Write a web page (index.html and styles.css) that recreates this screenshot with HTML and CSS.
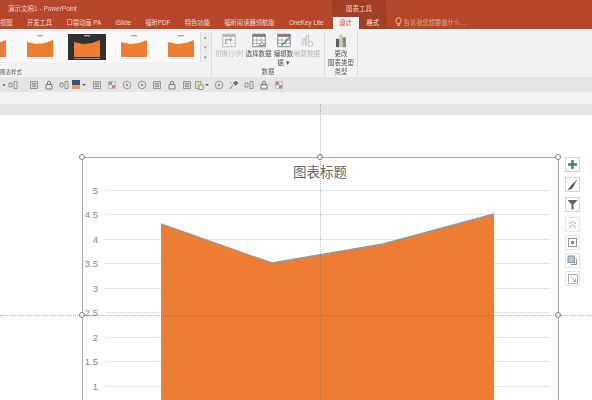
FILE: index.html
```html
<!DOCTYPE html>
<html lang="zh-CN">
<head>
    <meta charset="UTF-8">
    <title>演示文稿1 - PowerPoint</title>
    <link rel="stylesheet" href="styles.css">
</head>
<body>

<svg class="defs" width="0" height="0">
    <symbol id="mini" viewBox="0 0 38 26">
        <rect x="16" y="1" width="6" height="1.4" fill="#aaa"/>
        <path d="M6 8 L15 10 L24 9 L32 6 V23 H6 Z" fill="#ed7d31"/>
        <path d="M6 24.5 H32" stroke="#ccc" stroke-width=".6"/>
    </symbol>
    <symbol id="sheet" viewBox="0 0 18 18">
        <path d="M1.5 1.5 H16.5 V16.5 H1.5 Z" fill="#fbfbfb" stroke="currentColor"/>
        <path d="M1.5 1.5 H16.5 V4.5 H1.5 Z" fill="currentColor"/>
        <path d="M1.5 8.5 H16.5 M1.5 12.5 H16.5 M6.5 4.5 V16.5 M11.5 4.5 V16.5" stroke="currentColor" stroke-width=".6" fill="none"/>
    </symbol>
    <symbol id="q-lines" viewBox="0 0 10 10">
        <path d="M1.5 1.5 H8.5 V8.5 H1.5 Z M3 3.5 H7 M3 5 H7 M3 6.5 H7" fill="#d9d9d9" stroke="#858585" stroke-width=".8"/>
    </symbol>
    <symbol id="q-bag" viewBox="0 0 10 10">
        <path d="M2 4.5 H8 V9 H2 Z M3.5 4.5 V2 C3.5 1 6.5 1 6.5 2 V4.5" fill="none" stroke="#7d7d7d"/>
    </symbol>
    <symbol id="q-ring" viewBox="0 0 10 10">
        <circle cx="5" cy="5" r="3.8" fill="none" stroke="#8a8a8a" stroke-width=".9"/>
        <circle cx="5" cy="5" r="1.3" fill="#a09a90"/>
    </symbol>
    <symbol id="q-split" viewBox="0 0 10 10">
        <path d="M1 3 H4 V7 H1 Z M6 1.5 H9 V8.5 H6 Z" fill="#e2e2e2" stroke="#808080" stroke-width=".8"/>
    </symbol>
    <symbol id="q-scatter" viewBox="0 0 10 10">
        <path d="M1.5 1.5 H8.5 V8.5 H1.5 Z" fill="none" stroke="#aaa" stroke-width=".7"/>
        <path d="M2 2 H5 V5 H2 Z M5 5 H8 V8 H5 Z" fill="#b98b88"/>
    </symbol>
    <symbol id="q-note" viewBox="0 0 10 10">
        <path d="M1.5 1.5 H7 V8.5 H1.5 Z" fill="#e5dcae" stroke="#95906f" stroke-width=".8"/>
        <path d="M5 5 H9 V9.5 H5 Z" fill="#f3f2f4" stroke="#777" stroke-width=".8"/>
    </symbol>
    <symbol id="q-star" viewBox="0 0 10 10">
        <path d="M1 9 L4 5 M4.5 3 L7 1 L9 3 L6.5 5.5 Z" fill="#5f6f7f" stroke="#6b7884"/>
        <path d="M1 3 H3.5" stroke="#e8c77e" stroke-width="1.6"/>
    </symbol>
</svg>

<div class="titlebar">
    <span class="doc-title">演示文稿1 - PowerPoint</span>
    <span class="tool-context">图表工具</span>
</div>

<div class="tabs">
    <span class="tab first">视图</span>
    <span class="tab">开发工具</span>
    <span class="tab">口袋动画 PA</span>
    <span class="tab">iSlide</span>
    <span class="tab">福昕PDF</span>
    <span class="tab">特色功能</span>
    <span class="tab">福昕阅读器领航版</span>
    <span class="tab">OneKey Lite</span>
    <div class="context-tabs">
        <span class="active">设计</span>
        <span class="format">格式</span>
    </div>
    <span class="tell-me">
        <svg width="7" height="10" viewBox="0 0 7 10"><path d="M3.5 .7 A2.7 2.7 0 0 1 5 5.6 V7 H2 V5.6 A2.7 2.7 0 0 1 3.5 .7 Z M2.4 8.5 H4.6" fill="none" stroke="#f3d9a8" stroke-width=".9"/></svg>
        告诉我您想要做什么...
    </span>
</div>

<div class="ribbon">
    <div class="group styles">
        <div class="gallery-wrap">
            <div class="gallery">
                <svg class="thumb cut"><use href="#mini"/></svg>
                <svg class="thumb"><use href="#mini"/></svg>
                <svg class="thumb dark"><use href="#mini"/></svg>
                <svg class="thumb"><use href="#mini"/></svg>
                <svg class="thumb"><use href="#mini"/></svg>
            </div>
            <div class="gallery-scroll"><span>▴</span><span>▾</span><span>▾</span></div>
        </div>
        <div class="group-label left">图表样式</div>
    </div>
    <div class="group data">
        <div class="commands">
            <div class="cmd off switch">
                <svg width="16" height="15" viewBox="0 0 18 18" class="icon">
                    <use href="#sheet" width="18" height="18"/>
                    <path d="M5 13 V8 H12 M10 6 L12 8 L10 10" fill="none" stroke="#8f8f8f"/>
                </svg>
                <span>切换行/列</span>
            </div>
            <div class="cmd select">
                <svg width="16" height="15" viewBox="0 0 18 18" class="icon">
                    <use href="#sheet" width="18" height="18"/>
                    <path d="M9 15 L12.5 11 L16 15 Z" fill="#fbfbfb" stroke="#777"/>
                </svg>
                <span>选择数据</span>
            </div>
            <div class="cmd edit">
                <svg width="16" height="15" viewBox="0 0 18 18" class="icon">
                    <use href="#sheet" width="18" height="18"/>
                    <path d="M6 15 L16 5" stroke="#4d86b5" stroke-width="1.6"/>
                </svg>
                <span>编辑数<br>据 ▾</span>
            </div>
            <div class="cmd off refresh">
                <svg width="16" height="15" viewBox="0 0 18 18" class="icon">
                    <path d="M4 15 V7 H7 V15 M8 15 V3 H11 V12" fill="none" stroke="#b9b9b9"/>
                    <circle cx="13" cy="13" r="3" fill="none" stroke="#b9b9b9"/>
                </svg>
                <span>刷新数据</span>
            </div>
        </div>
        <div class="group-label">数据</div>
    </div>
    <div class="group type">
        <div class="commands">
            <div class="cmd">
                <svg width="16" height="15" viewBox="0 0 18 18" class="icon">
                    <rect x="3" y="7" width="4" height="10" fill="#44647f"/>
                    <rect x="7" y="2" width="4" height="15" fill="#d7c98a"/>
                    <rect x="11" y="5" width="4" height="12" fill="#8a8f93"/>
                </svg>
                <span>更改<br>图表类型</span>
            </div>
        </div>
        <div class="group-label">类型</div>
    </div>
</div>

<div class="qat">
    <span class="q narrow dot"></span>
    <span class="q narrow"><svg><use href="#q-split"/></svg></span>
    <span class="q gap-8"><svg><use href="#q-lines"/></svg></span>
    <span class="q"><svg><use href="#q-bag"/></svg></span>
    <span class="q"><svg><use href="#q-split"/></svg></span>
    <span class="q narrow drop"><i class="swatch"></i></span>
    <span class="q gap-8"><svg><use href="#q-lines"/></svg></span>
    <span class="q"><svg><use href="#q-scatter"/></svg></span>
    <span class="q"><svg><use href="#q-ring"/></svg></span>
    <span class="q"><svg><use href="#q-ring"/></svg></span>
    <span class="q"><svg><use href="#q-lines"/></svg></span>
    <span class="q"><svg><use href="#q-bag"/></svg></span>
    <span class="q"><svg><use href="#q-lines"/></svg></span>
    <span class="q narrow drop"><svg><use href="#q-note"/></svg></span>
    <span class="q gap-7"><svg><use href="#q-ring"/></svg></span>
    <span class="q"><svg><use href="#q-star"/></svg></span>
    <span class="q"><svg><use href="#q-split"/></svg></span>
    <span class="q"><svg><use href="#q-bag"/></svg></span>
    <span class="q"><svg><use href="#q-scatter"/></svg></span>
</div>

<div class="ruler"></div>

<div class="workspace">
    <div class="band"></div>
    <div class="stage">
        <div class="chart">
            <svg class="plot" width="477" height="260" viewBox="0 0 477 260">
                <text class="chart-title" x="238" y="20">图表标题</text>
                <g class="grid">
                    <path d="M23 33.5 H468"/><path d="M23 57.5 H468"/><path d="M23 82.5 H468"/>
                    <path d="M23 106.5 H468"/><path d="M23 131.5 H468"/><path d="M23 155.5 H468"/>
                    <path d="M23 180.5 H468"/><path d="M23 204.5 H468"/><path d="M23 229.5 H468"/>
                </g>
                <g class="ticks">
                    <text x="16" y="37">5</text><text x="16" y="61">4.5</text>
                    <text x="16" y="86">4</text><text x="16" y="110">3.5</text>
                    <text x="16" y="135">3</text><text x="16" y="159">2.5</text>
                    <text x="16" y="184">2</text><text x="16" y="208">1.5</text>
                    <text x="16" y="233">1</text>
                </g>
                <path d="M79 67 L190 106 L301 87 L412 57 V260 H79 Z" fill="#ed7d31"/>
                <path d="M79 67 L190 106 L301 87 L412 57" fill="none" stroke="#8d9ba3" stroke-width="1.4"/>
            </svg>
            <span class="handle tl"></span>
            <span class="handle tc"></span>
            <span class="handle tr"></span>
            <span class="handle ml"></span>
            <span class="handle mr"></span>
        </div>
        <div class="chart-tools">
            <div class="tool">
                <svg width="11" height="11" viewBox="0 0 11 11"><path d="M5.5 1 V10 M1 5.5 H10" stroke="#3f7f6b" stroke-width="2.4"/></svg>
            </div>
            <div class="tool">
                <svg width="11" height="11" viewBox="0 0 11 11"><path d="M10.5 .5 L4.5 6 L3 8 C2 10 1 10 0 10.5 C3 11 5 10 6 8 Z" fill="#555"/></svg>
            </div>
            <div class="tool">
                <svg width="11" height="11" viewBox="0 0 11 11"><path d="M.5 1 H10.5 L6.5 5.5 V10.5 H4.5 V5.5 Z" fill="#666"/></svg>
            </div>
            <div class="tool faint">
                <svg width="9" height="9" viewBox="0 0 9 9"><path d="M1 4 L4.5 1.5 L8 4 M1 7.5 L4.5 5 L8 7.5" fill="none" stroke="#aaa"/></svg>
            </div>
            <div class="tool faint">
                <svg width="9" height="9" viewBox="0 0 9 9"><rect x=".5" y=".5" width="8" height="8" fill="none" stroke="#999"/><rect x="3" y="3" width="3" height="3" fill="#888"/></svg>
            </div>
            <div class="tool faint">
                <svg width="11" height="11" viewBox="0 0 11 11"><rect x="1" y="1" width="6.5" height="6.5" fill="#b9c8d6" stroke="#7f95a8"/><path d="M9.5 4 V9.5 H4" fill="none" stroke="#999"/></svg>
            </div>
            <div class="tool faint">
                <svg width="10" height="10" viewBox="0 0 10 10"><path d="M.5 .5 H9.5 V9.5 H.5 Z M3 3 L7.5 7.5 M7.5 5 V7.5 H5" fill="none" stroke="#aaa"/></svg>
            </div>
        </div>
    </div>
    <div class="guide vertical"></div>
    <div class="guide horizontal"></div>
</div>

</body>
</html>
```

FILE: styles.css
```css
html, body {
    margin: 0;
    height: 400px;
    overflow: hidden;
}

body {
    width: 592px;
    font-family: "Liberation Sans", "Noto Sans CJK SC", sans-serif;
    background: #fff;
    display: flex;
    flex-direction: column;
}

.defs {
    position: absolute;
}

/* Title bar and tabs */
.titlebar {
    height: 15px;
    flex: none;
    display: flex;
    background: #b7472a;
    color: #eccdc3;
    font-size: 6.5px;
    line-height: 18px;
    filter: blur(.3px);
}

.doc-title {
    margin-left: 8px;
    width: 324px;
}

.tool-context {
    width: 54px;
    background: #a23f22;
    text-align: center;
}

.tabs {
    height: 14px;
    flex: none;
    display: flex;
    background: #b7472a;
    color: #f1dcd5;
    font-size: 6.3px;
    line-height: 15px;
    white-space: nowrap;
    filter: blur(.3px);
}

.tab {
    margin-left: 14.3px;
}

.tab.first {
    margin-left: 0;
}

.context-tabs {
    width: 54px;
    margin-left: 9px;
    display: flex;
    flex: none;
    background: #a23f22;
}

.context-tabs .active {
    width: 26px;
    margin-top: 2px;
    line-height: 12px;
    text-align: center;
    background: #f3f2f4;
    color: #b7472a;
}

.context-tabs .format {
    margin-left: 8px;
    color: #f6e6e0;
}

.tell-me {
    margin-left: 8px;
    color: #e2a693;
    display: flex;
    align-items: center;
    gap: 2px;
}

/* Ribbon */
.ribbon {
    height: 48px;
    flex: none;
    display: flex;
    background: #f3f2f4;
    color: #444;
    font-size: 6.5px;
    line-height: 8.5px;
    filter: blur(.3px);
}

.group {
    height: 45px;
    display: flex;
    flex-direction: column;
    border-right: 1px solid #dcdbdd;
    margin-top: 3px;
    position: relative;
}

.group-label {
    position: absolute;
    left: 0;
    right: 0;
    top: 36px;
    text-align: center;
    color: #666;
}

.group-label.left {
    text-align: left;
    font-size: 5.5px;
}

.styles {
    width: 211px;
}

.gallery-wrap {
    display: flex;
    height: 30px;
}

.gallery {
    width: 200px;
    display: flex;
    align-items: center;
    gap: 9px;
    background: #fbfafb;
    overflow: hidden;
}

.thumb {
    width: 38px;
    height: 26px;
    flex: none;
}

.thumb.cut {
    margin-left: -26px;
}

.thumb.dark {
    background: #33312f;
}

.gallery-scroll {
    width: 8px;
    display: flex;
    flex-direction: column;
    background: #ececed;
    border-left: 1px solid #dcdbdd;
    color: #888;
    font-size: 5px;
    line-height: 10px;
    text-align: center;
}

.data {
    width: 112px;
}

.type {
    width: 32px;
}

.commands {
    display: flex;
    justify-content: flex-start;
}

.data .commands {
    padding-left: 2px;
}

.cmd {
    display: flex;
    flex-direction: column;
    align-items: center;
    text-align: center;
    white-space: nowrap;
    color: #555;
    padding-top: 1px;
}

.cmd.switch { width: 30px; }
.cmd.select { width: 29px; }
.cmd.edit { width: 21px; }
.cmd.refresh { width: 26px; }

.type .cmd {
    width: 32px;
}

.cmd .icon {
    margin-bottom: 2px;
    color: #777;
}

.cmd.off,
.cmd.off .icon {
    color: #b4b4b4;
}

/* Quick access strip */
.qat {
    height: 15px;
    flex: none;
    display: flex;
    align-items: center;
    background: #e6e5e6;
    filter: blur(.3px);
}

.q {
    width: 15px;
    height: 11px;
    flex: none;
    display: flex;
    align-items: center;
    justify-content: center;
    position: relative;
}

.q svg {
    width: 10px;
    height: 10px;
}

.q.narrow {
    width: 10px;
}

.q.gap-8 {
    margin-left: 8px;
}

.q.gap-7 {
    margin-left: 7px;
}

.q.dot {
    width: 8px;
}

.q.dot::before {
    content: "";
    width: 2px;
    height: 2px;
    background: #777;
}

.q.drop::after {
    content: "";
    position: absolute;
    left: 11px;
    top: 5px;
    border: 2px solid transparent;
    border-top-color: #666;
}

.swatch {
    width: 8px;
    height: 9px;
    background: linear-gradient(180deg, #35567f 60%, #ee9a5c 60%);
}

.ruler {
    height: 12px;
    flex: none;
    background: #f6f3f6;
}

/* Slide area */
.workspace {
    flex: 1;
    position: relative;
    display: flex;
    flex-direction: column;
    overflow: hidden;
}

.band {
    height: 11px;
    flex: none;
    background: #e6e6e6;
}

.stage {
    flex: 1;
    display: flex;
    align-items: flex-start;
    padding: 42px 0 0 82px;
    background: #fff;
}

.chart {
    width: 477px;
    height: 300px;
    flex: none;
    position: relative;
    box-shadow: inset 1px 1px 0 #a9a9a9, inset -1px 0 0 #a9a9a9;
}

.plot {
    display: block;
}

.chart-title {
    font-size: 13.5px;
    fill: #666;
    text-anchor: middle;
}

.grid path {
    stroke: #e6e6e6;
    stroke-width: 1;
}

.ticks text {
    font-size: 9.5px;
    fill: #888;
    text-anchor: end;
}

.handle {
    position: absolute;
    width: 4px;
    height: 4px;
    border: 1px solid #7d7d7d;
    border-radius: 50%;
    background: #fff;
}

.handle.tl { left: -3px; top: -3px; }
.handle.tc { left: 235px; top: -3px; }
.handle.tr { left: 473px; top: -3px; }
.handle.ml { left: -3px; top: 155px; }
.handle.mr { left: 473px; top: 155px; }

.chart-tools {
    margin-left: 6px;
    display: flex;
    flex-direction: column;
    gap: 5px;
}

.tool {
    width: 15px;
    height: 15px;
    box-sizing: border-box;
    border: 1px solid #d4d4d4;
    display: flex;
    align-items: center;
    justify-content: center;
}

.tool.faint {
    margin-bottom: -2px;
    border-color: #e6e6e6;
}

.guide {
    position: absolute;
}

.guide.vertical {
    left: 320px;
    top: 0;
    bottom: 0;
    border-left: 1px dotted rgba(110, 110, 110, 0.45);
}

.guide.horizontal {
    left: 0;
    right: 0;
    top: 211px;
    border-top: 1px dotted rgba(110, 110, 110, 0.5);
}
```
